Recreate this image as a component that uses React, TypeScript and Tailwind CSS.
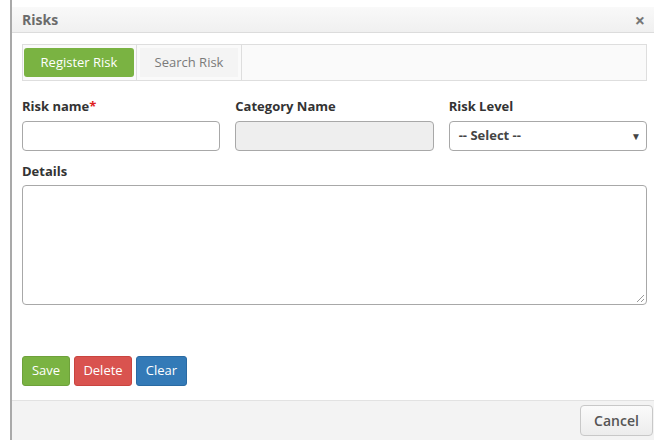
export default function App() {
  return (
    <div className="w-[671px] h-[447px] bg-white overflow-hidden" style={{ fontFamily: '"Open Sans", "Liberation Sans", sans-serif' }}>
      <div className="ml-[10px] pt-[7px] w-[644px] h-[440px] border-l-2 border-l-[#a9a9a9] flex flex-col">
        {/* header */}
        <div className="h-[26px] flex items-center justify-between pl-[10px] pr-[9px] bg-gradient-to-b from-[#f9f9f9] to-[#f0f0f0] border-b border-[#dcdcdc]">
          <span className="text-[14px] font-bold text-[#6b6b6b]">Risks</span>
          <span className="text-[18px] font-bold text-[#777] leading-none">×</span>
        </div>

        {/* body */}
        <div className="flex-1 pl-[10px] pr-[7px] pt-[11px]">
          <div className="h-[37px] border border-[#dedede] bg-[#fafafa] flex items-stretch">
            <div className="flex items-center pl-[1px] pr-[2px] border-r border-[#dedede]">
              <button className="h-[29px] w-[110px] rounded-[3px] bg-[#7ab342] text-white text-[13px]">Register Risk</button>
            </div>
            <div className="flex items-center px-[3px] border-r border-[#dedede]">
              <button className="h-[29px] w-[98px] bg-[#f4f4f4] text-[#7a7a7a] text-[13px]">Search Risk</button>
            </div>
          </div>

          <div className="grid grid-cols-3 gap-x-[15px] mt-[16px]">
            <div>
              <div className="text-[13px] font-bold text-[#333] leading-[18px]">Risk name<span className="text-[#e02020]">*</span></div>
              <div className="mt-[6px] h-[30px] border border-[#a8a8a8] rounded-[4px] bg-white" />
            </div>
            <div>
              <div className="text-[13px] font-bold text-[#333] leading-[18px]">Category Name</div>
              <div className="mt-[6px] h-[30px] border border-[#a8a8a8] rounded-[4px] bg-[#eeeeee]" />
            </div>
            <div>
              <div className="text-[13px] font-bold text-[#333] leading-[18px]">Risk Level</div>
              <div className="mt-[6px] h-[30px] border border-[#a8a8a8] rounded-[4px] bg-white flex items-center justify-between pl-[9px] pr-[5px]">
                <span className="text-[13px] font-bold text-[#444]">-- Select --</span>
                <span className="text-[10px] text-[#444]">▼</span>
              </div>
            </div>
          </div>

          <div className="mt-[11px] text-[13px] font-bold text-[#333] leading-[18px]">Details</div>
          <div className="relative mt-[5px] h-[120px] border border-[#a8a8a8] rounded-[4px] bg-white">
            <svg className="absolute right-[1px] bottom-[1px]" width="9" height="9" viewBox="0 0 9 9">
              <line x1="8" y1="1" x2="1" y2="8" stroke="#999" strokeWidth="1" />
              <line x1="8" y1="5" x2="5" y2="8" stroke="#999" strokeWidth="1" />
            </svg>
          </div>

          <div className="flex gap-[4px] mt-[51px]">
            <button className="h-[30px] w-[48px] rounded-[3px] bg-[#7ab342] border border-[#6ea13b] text-white text-[13px]">Save</button>
            <button className="h-[30px] w-[58px] rounded-[3px] bg-[#d9534f] border border-[#c9443f] text-white text-[13px]">Delete</button>
            <button className="h-[30px] w-[51px] rounded-[3px] bg-[#337ab7] border border-[#2a6aa2] text-white text-[13px]">Clear</button>
          </div>
        </div>

        {/* footer */}
        <div className="h-[40px] bg-[#f3f3f3] border-t border-[#e2e2e2] flex items-center justify-end pr-[1px]">
          <button className="h-[31px] w-[73px] rounded-[4px] border border-[#c8c8c8] bg-gradient-to-b from-[#fbfbfb] to-[#ececec] text-[14px] text-[#555] font-semibold">Cancel</button>
        </div>
      </div>
    </div>
  );
}
